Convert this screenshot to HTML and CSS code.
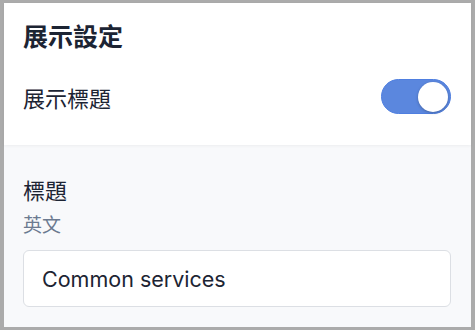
FILE: index.html
```html
<!DOCTYPE html>
<html lang="zh-Hant">
<head>
<meta charset="utf-8">
<link rel="stylesheet" href="styles.css">
</head>
<body>
<div class="frame">
  <section class="display">
    <h2 class="title">展示設定</h2>
    <div class="row">
      <span class="row-label">展示標題</span>
      <span class="toggle"><span class="knob"></span></span>
    </div>
  </section>
  <section class="field">
    <div class="field-label">標題</div>
    <div class="field-hint">英文</div>
    <div class="input">Common services</div>
  </section>
</div>
</body>
</html>
```

FILE: styles.css
```css
html, body {
  margin: 0;
  padding: 0;
}
body {
  width: 475px;
  height: 330px;
  background: #ababab;
  font-family: "Inter", "Noto Sans CJK TC", sans-serif;
  color: #1c2433;
}
.frame {
  box-sizing: border-box;
  width: 475px;
  height: 330px;
  border-style: solid;
  border-color: #ababab;
  border-width: 3px 4px 3px 4px;
  background: #f8f9fb;
  display: flex;
  flex-direction: column;
}
.display {
  background: #ffffff;
  padding: 16px 20px 31px 19px;
  box-shadow: 0 1px 3px rgba(0, 0, 0, 0.05);
  position: relative;
  z-index: 1;
}
.title {
  margin: 0;
  font-family: "Noto Sans CJK TC", sans-serif;
  font-size: 25px;
  line-height: 32px;
  font-weight: 700;
}
.row {
  margin-top: 28px;
  height: 35px;
  display: flex;
  align-items: center;
  justify-content: space-between;
}
.row-label {
  font-family: "Noto Sans CJK TC", sans-serif;
  font-size: 22px;
  line-height: 28px;
}
.toggle {
  box-sizing: border-box;
  width: 70px;
  height: 35px;
  border-radius: 18px;
  background: #5b87de;
  border: 1px solid #4f7fe0;
  display: flex;
  align-items: center;
  justify-content: flex-end;
  padding-right: 2px;
}
.knob {
  width: 30px;
  height: 30px;
  border-radius: 50%;
  background: #ffffff;
  box-shadow: 0 1px 3px rgba(0, 0, 0, 0.25);
}
.field {
  flex: 1;
  padding: 30px 20px 20px 19px;
}
.field-label {
  font-family: "Noto Sans CJK TC", sans-serif;
  font-size: 22px;
  line-height: 28px;
}
.field-hint {
  margin-top: 8px;
  font-family: "Noto Sans CJK TC", sans-serif;
  font-size: 19px;
  line-height: 26px;
  color: #6b7a90;
}
.input {
  box-sizing: border-box;
  margin-top: 13px;
  height: 57px;
  border: 1px solid #dcdfe4;
  border-radius: 6px;
  background: #ffffff;
  padding: 0 18px;
  display: flex;
  align-items: center;
  font-size: 21.5px;
  color: #1c2433;
}
```
